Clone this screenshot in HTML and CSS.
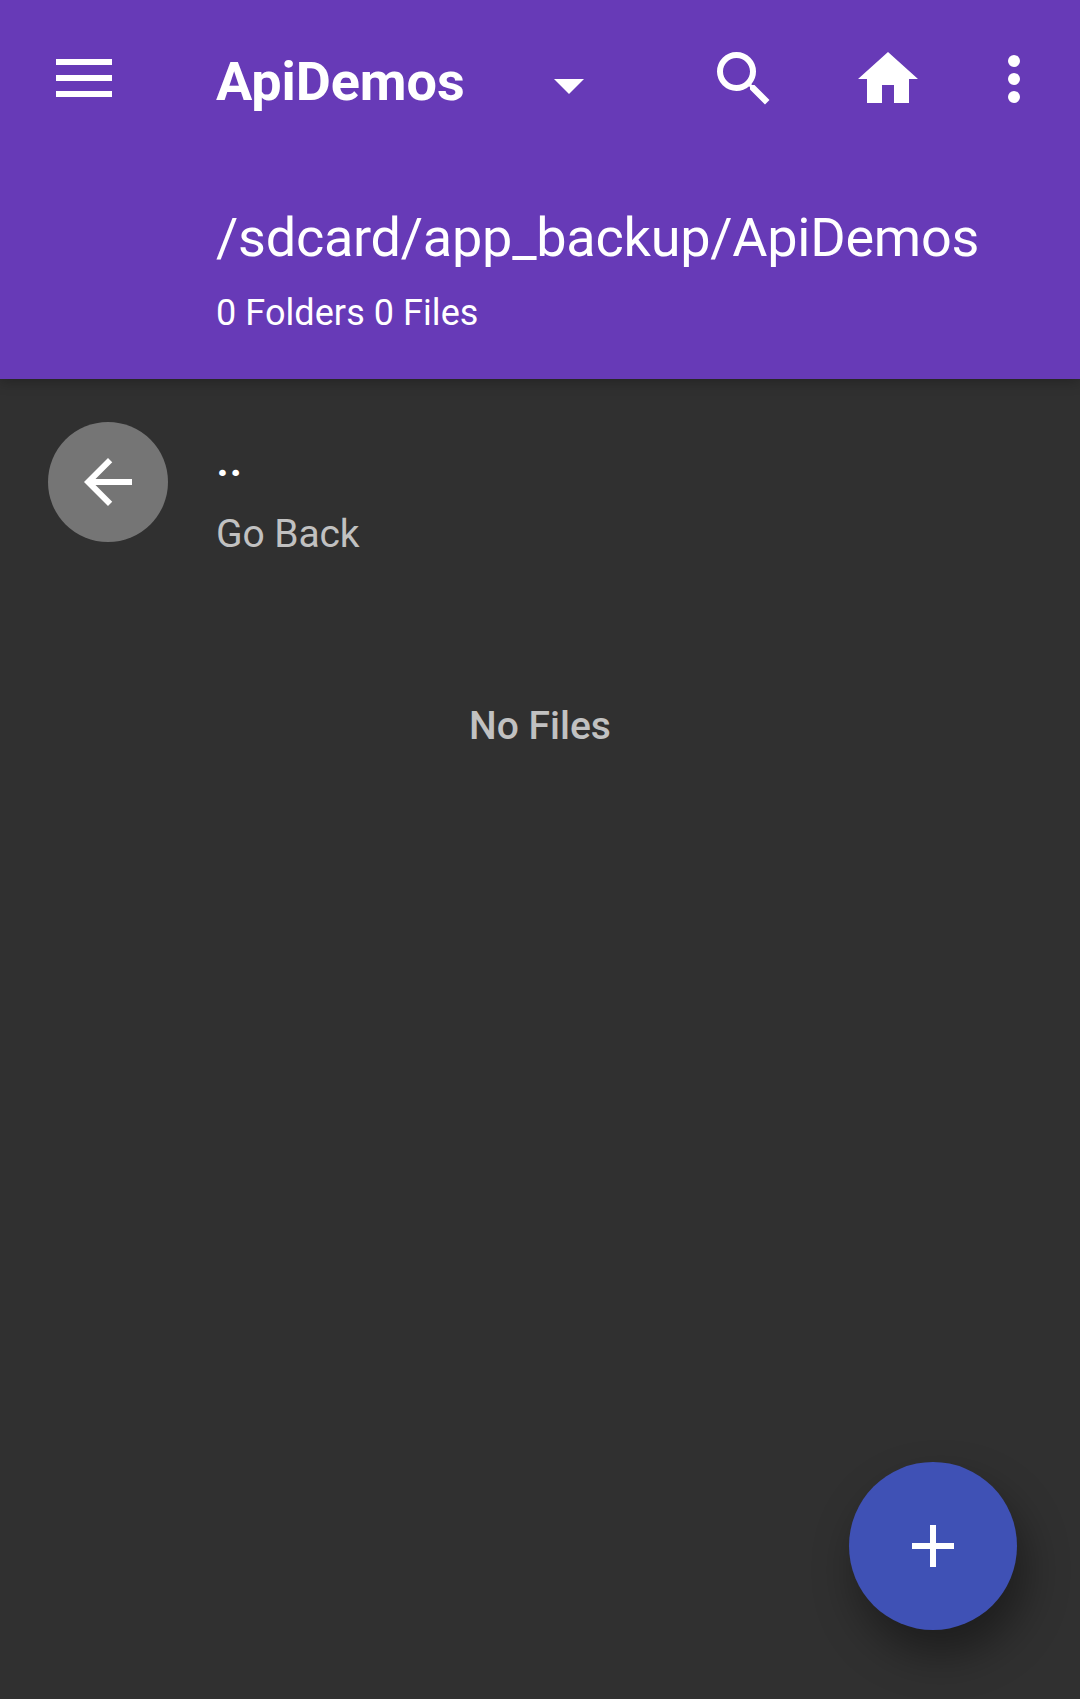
FILE: index.html
```html
<!DOCTYPE html>
<html lang="en">
<head>
<meta charset="utf-8">
<title>ApiDemos</title>
<link rel="stylesheet" href="styles.css">
</head>
<body>
<header class="header">
  <div class="toolbar">
    <svg class="icon-menu" viewBox="0 0 56 38"><path d="M0 0h56v6H0zM0 16h56v6H0zM0 32h56v6H0z"/></svg>
    <h1 class="title">ApiDemos</h1>
    <svg class="icon-caret" viewBox="0 0 30 15"><path d="M0 0h30L15 15z"/></svg>
    <nav class="actions">
      <svg class="icon" viewBox="0 0 24 24"><path d="M15.5 14h-.79l-.28-.27A6.471 6.471 0 0 0 16 9.5 6.5 6.5 0 1 0 9.5 16c1.61 0 3.09-.59 4.23-1.57l.27.28v.79l5 4.99L20.49 19l-4.99-5zm-6 0C7.01 14 5 11.99 5 9.5S7.01 5 9.5 5 14 7.01 14 9.5 11.99 14 9.5 14z"/></svg>
      <svg class="icon icon-home" viewBox="0 0 24 24"><path d="M10 20v-6h4v6h5v-8h3L12 3 2 12h3v8z"/></svg>
      <svg class="icon icon-more" viewBox="0 0 24 24"><circle cx="12" cy="6" r="2"/><circle cx="12" cy="12" r="2"/><circle cx="12" cy="18" r="2"/></svg>
    </nav>
  </div>
  <div class="location">
    <div class="path">/sdcard/app_backup/ApiDemos</div>
    <div class="summary">0 Folders 0 Files</div>
  </div>
</header>
<main class="content">
  <div class="row">
    <div class="avatar">
      <svg class="icon" viewBox="0 0 24 24"><path d="M20 11H7.83l5.59-5.59L12 4l-8 8 8 8 1.41-1.41L7.83 13H20v-2z"/></svg>
    </div>
    <div class="row-text">
      <div class="row-name">..</div>
      <div class="row-detail">Go Back</div>
    </div>
  </div>
  <p class="empty">No Files</p>
</main>
<button class="fab" aria-label="Add">
  <svg class="icon" viewBox="0 0 24 24"><path d="M19 13h-6v6h-2v-6H5v-2h6V5h2v6h6v2z"/></svg>
</button>
</body>
</html>
```
FILE: styles.css
```css
* { box-sizing: border-box; }

body {
  margin: 0;
  min-height: 1699px;
  background: #303030;
  color: #fff;
  font-family: Roboto, "Liberation Sans", sans-serif;
}

svg { display: block; flex: none; fill: currentColor; }

.header {
  height: 379px;
  background: #673ab7;
  box-shadow: 0 3px 12px rgba(0, 0, 0, 0.25);
}

.toolbar {
  display: flex;
  align-items: center;
  height: 158px;
  padding: 0 30px 0 56px;
}

.icon { width: 72px; height: 72px; }

.icon-menu { width: 56px; height: 38px; margin: 0 104px 2px 0; }

.title {
  width: 338px;
  margin: 0;
  padding-top: 5px;
  font-size: 54px;
  line-height: 64px;
  font-weight: 700;
  letter-spacing: -0.1px;
}

.icon-caret { width: 30px; height: 15px; margin-top: 15px; }

.actions { display: flex; margin-left: auto; }

.icon-home { margin-left: 72px; }

.icon-more { margin-left: 54px; }

.location { padding: 48px 0 0 216px; }

.path {
  font-size: 54px;
  line-height: 64px;
  letter-spacing: -0.24px;
  white-space: nowrap;
}

.summary {
  margin-top: 22px;
  font-size: 36px;
  line-height: 42px;
  letter-spacing: 0.07px;
}

.row { display: flex; padding: 43px 48px 0; }

.avatar {
  display: flex;
  align-items: center;
  justify-content: center;
  width: 120px;
  height: 120px;
  margin-right: 48px;
  border-radius: 50%;
  background: #757575;
}

.row-text { padding-top: 10px; }

.row-name { font-size: 48px; line-height: 56px; font-weight: 500; }

.row-detail {
  margin-top: 23px;
  color: #c1c1c1;
  font-size: 39px;
  line-height: 46px;
  letter-spacing: -0.1px;
}

.empty {
  margin: 146px 0 0;
  color: #c1c1c1;
  font-size: 39px;
  line-height: 46px;
  font-weight: 500;
  text-align: center;
}

.fab {
  position: fixed;
  right: 63px;
  bottom: 69px;
  display: flex;
  align-items: center;
  justify-content: center;
  width: 168px;
  height: 168px;
  padding: 0;
  border: 0;
  border-radius: 50%;
  background: #3f51b5;
  color: #fff;
  box-shadow: 8px 24px 44px rgba(0, 0, 0, 0.4);
}
```
